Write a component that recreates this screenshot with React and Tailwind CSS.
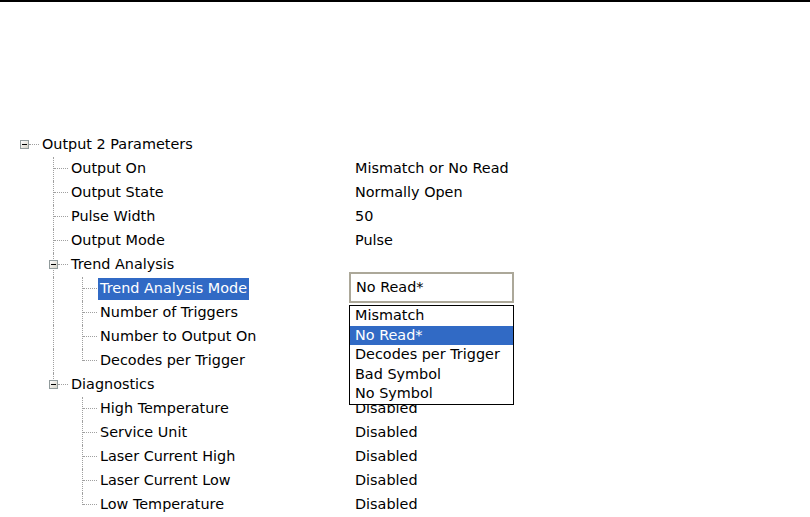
import React from "react";

const FONT = { fontFamily: '"DejaVu Sans", Tahoma, sans-serif' };

// each row: level, label, value, flags for the tree connectors
const ROWS = [
  { level: 0, label: "Output 2 Parameters", box: true },
  { level: 1, label: "Output On", value: "Mismatch or No Read", cont: [] },
  { level: 1, label: "Output State", value: "Normally Open", cont: [] },
  { level: 1, label: "Pulse Width", value: "50", cont: [] },
  { level: 1, label: "Output Mode", value: "Pulse", cont: [] },
  { level: 1, label: "Trend Analysis", box: true, cont: [] },
  { level: 2, label: "Trend Analysis Mode", selected: true, cont: [true] },
  { level: 2, label: "Number of Triggers", cont: [true] },
  { level: 2, label: "Number to Output On", cont: [true] },
  { level: 2, label: "Decodes per Trigger", last: true, cont: [true] },
  { level: 1, label: "Diagnostics", box: true, last: true, cont: [] },
  { level: 2, label: "High Temperature", value: "Disabled", cont: [false] },
  { level: 2, label: "Service Unit", value: "Disabled", cont: [false] },
  { level: 2, label: "Laser Current High", value: "Disabled", cont: [false] },
  { level: 2, label: "Laser Current Low", value: "Disabled", cont: [false] },
  { level: 2, label: "Low Temperature", value: "Disabled", last: true, cont: [false] },
];

const OPTIONS = ["Mismatch", "No Read*", "Decodes per Trigger", "Bad Symbol", "No Symbol"];

function MinusBox() {
  return (
    <div className="absolute left-[10px] top-[7px] w-[9px] h-[9px] border border-[#919b9c] bg-gradient-to-br from-white to-[#d6d3c8] flex items-center justify-center">
      <div className="w-[5px] h-px bg-black" />
    </div>
  );
}

function Cell({ vertical, half, connector, box, root }) {
  return (
    <div className="relative w-[29px] h-full shrink-0">
      {vertical && (
        <div className={`absolute left-[14px] top-0 w-0 border-l border-dotted border-[#a0a0a0] ${half ? "h-[12px]" : "h-full"}`} />
      )}
      {connector && (
        <div className={`absolute top-[11px] right-0 h-0 border-t border-dotted border-[#a0a0a0] ${box || root ? "w-[10px]" : "w-[14px]"}`} />
      )}
      {box && <MinusBox />}
    </div>
  );
}

function Row({ row }) {
  const cells = [];
  if (row.level === 0) {
    cells.push(<Cell key="r" connector box root />);
  } else {
    cells.push(<div key="pad" className="w-[29px] shrink-0" />);
    if (row.level === 2) {
      cells.push(<Cell key="c1" vertical={row.cont[0]} />);
    }
    cells.push(<Cell key="own" vertical half={row.last} connector box={row.box} />);
  }

  return (
    <div className="flex h-[24px] items-stretch">
      <div className="flex w-[355px] shrink-0 pl-[10px]">
        {cells}
        <div className="flex items-center pl-[3px]">
          <span
            className={
              row.selected
                ? "bg-[#316ac5] text-white px-[2px] -ml-[2px] h-[22px] flex items-center"
                : "text-black"
            }
          >
            {row.label}
          </span>
        </div>
      </div>
      <div className="flex items-center text-black">{row.value}</div>
    </div>
  );
}

export default function App() {
  return (
    <div className="relative w-[810px] h-[517px] bg-white overflow-hidden text-[14.4px]" style={FONT}>
      <div className="border-t-2 border-black w-full" />
      <div className="pt-[131px]">
        {ROWS.map((r) => (
          <Row key={r.label} row={r} />
        ))}
      </div>

      {/* combo box editor */}
      <div className="absolute left-[349px] top-[272px] w-[165px] h-[31px] border-2 border-[#aca899] bg-white flex items-center pl-[5px] text-black">
        No Read*
      </div>

      {/* open drop-down list */}
      <div className="absolute left-[349px] top-[305px] w-[165px] border border-black bg-white">
        {OPTIONS.map((o) => (
          <div
            key={o}
            className={`h-[19.6px] flex items-center pl-[5px] ${o === "No Read*" ? "bg-[#316ac5] text-white" : "text-black"}`}
          >
            {o}
          </div>
        ))}
      </div>
    </div>
  );
}
